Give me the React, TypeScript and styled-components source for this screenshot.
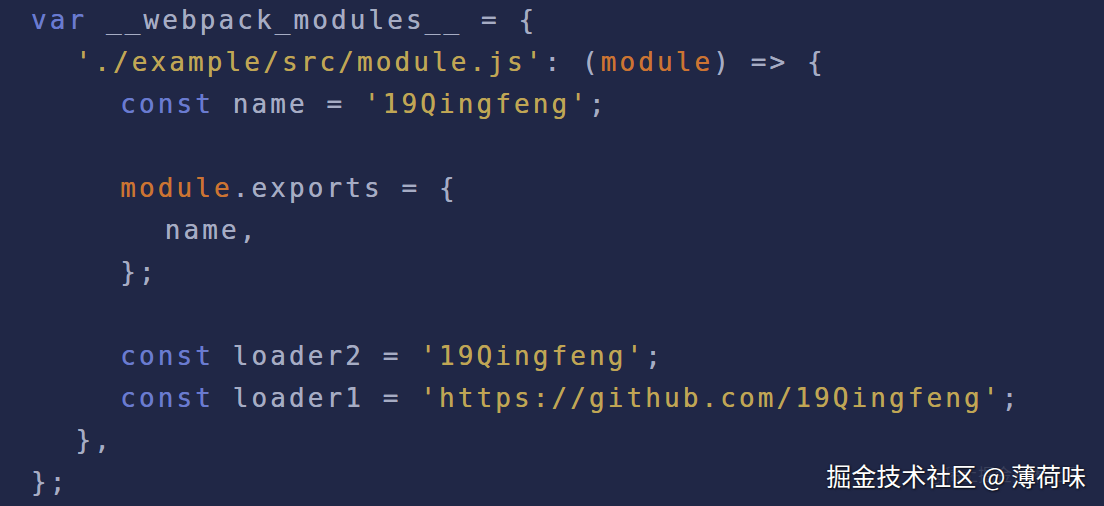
import React from "react";
import styled, { createGlobalStyle } from "styled-components";

const Global = createGlobalStyle`
  html, body { margin: 0; padding: 0; background: #202746; }
  body { width: 1104px; height: 506px; overflow: hidden; }
`;

type Kind = "kw" | "id" | "str" | "param";

const colors: Record<Kind, string> = {
  kw: "#6a7bd0",
  id: "#a6acc4",
  str: "#c0a655",
  param: "#cc7433",
};

const Frame = styled.div`
  position: relative;
  width: 1104px;
  height: 506px;
  background: #202746;
  overflow: hidden;
`;

const Code = styled.pre`
  margin: -1px 0 0 0;
  padding: 0 0 0 31px;
  font-family: "DejaVu Sans Mono", "Liberation Mono", monospace;
  font-size: 26px;
  letter-spacing: 3.1px;
  line-height: 42px;
  color: ${colors.id};
  display: flex;
  flex-direction: column;
  text-shadow: 0 0 0.4px currentColor;
`;

const Line = styled.div<{ $indent: number }>`
  height: 42px;
  padding-left: ${(p) => p.$indent * 44.6}px;
  white-space: pre;
`;

const Tok = styled.span<{ $k: Kind }>`
  color: ${(p) => colors[p.$k]};
`;

const Watermark = styled.div`
  position: absolute;
  right: 18px;
  bottom: 16px;
  font-family: "Noto Sans CJK SC", "Noto Sans", sans-serif;
  font-size: 25px;
  line-height: 30px;
  color: #ffffff;
  text-shadow: 0 0 2px rgba(0, 0, 0, 0.7), 1px 1px 2px rgba(0, 0, 0, 0.6);
  white-space: pre;
`;

const Ghost = styled.div`
  position: absolute;
  right: 24px;
  bottom: 22px;
  font-family: "Noto Sans CJK SC", "Noto Sans", sans-serif;
  font-size: 17px;
  line-height: 20px;
  color: rgba(255, 255, 255, 0.12);
  white-space: pre;
`;

type T = [Kind, string];
const lines: { indent: number; toks: T[] }[] = [
  { indent: 0, toks: [["kw", "var"], ["id", " __webpack_modules__ = {"]] },
  {
    indent: 1,
    toks: [
      ["str", "'./example/src/module.js'"],
      ["id", ": ("],
      ["param", "module"],
      ["id", ") => {"],
    ],
  },
  {
    indent: 2,
    toks: [["kw", "const"], ["id", " name = "], ["str", "'19Qingfeng'"], ["id", ";"]],
  },
  { indent: 2, toks: [] },
  { indent: 2, toks: [["param", "module"], ["id", ".exports = {"]] },
  { indent: 3, toks: [["id", "name,"]] },
  { indent: 2, toks: [["id", "};"]] },
  { indent: 2, toks: [] },
  {
    indent: 2,
    toks: [["kw", "const"], ["id", " loader2 = "], ["str", "'19Qingfeng'"], ["id", ";"]],
  },
  {
    indent: 2,
    toks: [
      ["kw", "const"],
      ["id", " loader1 = "],
      ["str", "'https://github.com/19Qingfeng'"],
      ["id", ";"],
    ],
  },
  { indent: 1, toks: [["id", "},"]] },
  { indent: 0, toks: [["id", "};"]] },
];

export default function App() {
  return (
    <Frame>
      <Global />
      <Code>
        {lines.map((l, i) => (
          <Line key={i} $indent={l.indent}>
            {l.toks.map(([k, s], j) => (
              <Tok key={j} $k={k}>
                {s}
              </Tok>
            ))}
          </Line>
        ))}
      </Code>
      <Ghost>@稀土掘金技术社区</Ghost>
      <Watermark>掘金技术社区 @ 薄荷味</Watermark>
    </Frame>
  );
}
